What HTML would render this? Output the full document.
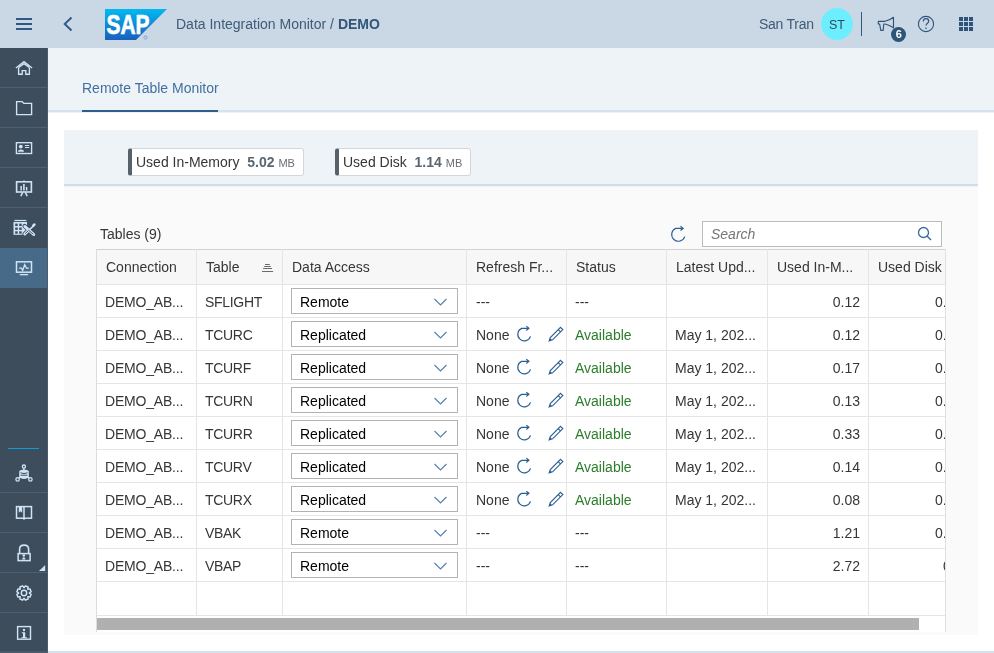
<!DOCTYPE html>
<html><head><meta charset="utf-8"><title>Data Integration Monitor</title>
<style>
*{box-sizing:border-box;margin:0;padding:0}
html,body{width:994px;height:653px;overflow:hidden;background:#fff;font-family:"Liberation Sans",sans-serif;font-size:14px;color:#363636;-webkit-font-smoothing:antialiased}
.a{position:absolute}
.t{position:absolute;white-space:nowrap;line-height:16px;will-change:transform}
svg{position:absolute;overflow:visible}
</style></head><body>
<div class="a" style="left:0;top:0;width:994px;height:48px;background:#cad7e4"></div>
<svg style="left:0;top:0" width="48" height="48"><g fill="#2e5984"><rect x="16" y="18" width="16" height="2"/><rect x="16" y="23" width="16" height="2"/><rect x="16" y="28" width="16" height="2"/></g></svg>
<svg style="left:0;top:0" width="90" height="48"><polyline points="71.5,17.5 64.7,24 71.5,30.5" fill="none" stroke="#2e5984" stroke-width="1.9"/></svg>
<svg style="left:105px;top:9px" width="62" height="31" viewBox="0 0 62 31"><defs><linearGradient id="g" x1="0" y1="0" x2="0" y2="1"><stop offset="0" stop-color="#00b9f2"/><stop offset="1" stop-color="#1b5fbe"/></linearGradient></defs><polygon points="0,0 62,0 31,31 0,31" fill="url(#g)"/><text x="1.5" y="25" font-family="Liberation Sans" font-weight="bold" font-size="27" fill="#fff" stroke="#fff" stroke-width="0.7" textLength="43" lengthAdjust="spacingAndGlyphs">SAP</text><circle cx="40.5" cy="28.5" r="1.6" fill="none" stroke="#3d8fd8" stroke-width="0.6"/></svg>
<div class="t" style="left:176px;top:16px;color:#3e5b79;font-size:14px">Data Integration Monitor / <b style="color:#32557a">DEMO</b></div>
<div class="t" style="left:759px;top:16px;color:#3e5b79;letter-spacing:-0.25px">San Tran</div>
<div class="a" style="left:821px;top:8px;width:32px;height:32px;border-radius:50%;background:#6deeff"></div>
<div class="t" style="left:821px;top:16.5px;width:32px;text-align:center;font-size:12.5px;color:#2f4a5e">ST</div>
<div class="a" style="left:861px;top:12px;width:1px;height:24px;background:#35577a"></div>
<svg style="left:0;top:0" width="994" height="48"><g fill="none" stroke="#2f5479" stroke-width="1.15" stroke-linejoin="round"><path d="M878.3,21.3 H885 Q889.5,20.5 893.5,17.3 V27.8 Q889.5,25 885,24 H883.8 L883.2,30.3 H880.8 L879.6,24 H878.3 Z"/></g><circle cx="926" cy="24" r="7.6" fill="none" stroke="#2f5479" stroke-width="1.1"/><path d="M923.3,21.5 C923.3,19.6 924.6,18.6 926,18.6 C927.6,18.6 928.7,19.7 928.7,21.2 C928.7,23.2 926,23.3 926,25.6" fill="none" stroke="#2f5479" stroke-width="1.2"/><circle cx="926" cy="28.3" r="0.8" fill="#2f5479"/></svg>
<div class="a" style="left:890.5px;top:26.5px;width:15.5px;height:15.5px;border-radius:50%;background:#2d5479"></div>
<div class="t" style="left:890.5px;top:27px;width:15.5px;text-align:center;font-size:11px;font-weight:bold;color:#fff;line-height:14px">6</div>
<svg style="left:0;top:0" width="994" height="48"><g fill="#2f5479"><rect x="959" y="17" width="4" height="4"/><rect x="964" y="17" width="4" height="4"/><rect x="969" y="17" width="4" height="4"/><rect x="959" y="22" width="4" height="4"/><rect x="964" y="22" width="4" height="4"/><rect x="969" y="22" width="4" height="4"/><rect x="959" y="27" width="4" height="4"/><rect x="964" y="27" width="4" height="4"/><rect x="969" y="27" width="4" height="4"/></g></svg>
<div class="a" style="left:0;top:48px;width:48px;height:605px;background:#3e4d5b"></div>
<div class="a" style="left:0;top:248px;width:48px;height:40px;background:#486a89"></div>
<div class="a" style="left:0;top:87px;width:48px;height:1px;background:#4f6071"></div>
<div class="a" style="left:0;top:127px;width:48px;height:1px;background:#4f6071"></div>
<div class="a" style="left:0;top:167px;width:48px;height:1px;background:#4f6071"></div>
<div class="a" style="left:0;top:207px;width:48px;height:1px;background:#4f6071"></div>
<div class="a" style="left:0;top:492px;width:48px;height:1px;background:#4f6071"></div>
<div class="a" style="left:0;top:532px;width:48px;height:1px;background:#4f6071"></div>
<div class="a" style="left:0;top:572px;width:48px;height:1px;background:#4f6071"></div>
<div class="a" style="left:0;top:612px;width:48px;height:1px;background:#4f6071"></div>
<div class="a" style="left:8px;top:448px;width:31px;height:1px;background:#0a9fd8"></div>
<svg style="left:0;top:0" width="48" height="653"><g fill="none" stroke="#d0e4f7" stroke-width="1.35" stroke-linejoin="miter">
<path d="M15.9,68 L24,61.6 L32.1,68"/><path d="M18.6,67.4 L24,63.6 L29.4,67.4"/><path d="M18.6,67.4 V74.2 H22.2 V70.6 H25.8 V74.2 H29.4 V67.4"/>
<path d="M16.6,101.6 H22.2 L23.8,103.4 H31.6 V114.6 H16.6 Z"/>
<rect x="16.4" y="142.7" width="15.2" height="10.8"/>
<rect x="16.6" y="181.8" width="14.8" height="10.2" stroke-width="1.6"/>
<path d="M22.6,192.6 L20.8,196.2 M25.4,192.6 L27.2,196.2" stroke-width="1.5"/>
<rect x="16.5" y="261.8" width="15" height="10.4" stroke-width="1.5"/>
<path d="M19.2,268.2 H21.4 L22.7,270.4 L24.7,264.6 L26.5,268.2 H28.8" stroke-width="1.3"/>
<rect x="16.5" y="506.6" width="15" height="11.6" stroke-width="1.5"/>
<path d="M24,506.6 V519.8" stroke-width="1.5"/>
<rect x="18.1" y="553.6" width="12" height="7" stroke-width="1.5"/>
<path d="M19.6,553.6 V549.2 C19.6,543.8 28.6,543.8 28.6,549.2 V553.6" stroke-width="1.6"/>
<rect x="17.6" y="626.6" width="12.9" height="12.6" stroke-width="1.4"/>
<polygon points="31.18,594.33 30.01,597.14 27.94,596.69 27.69,596.94 28.14,599.01 25.33,600.18 24.18,598.40 23.82,598.40 22.67,600.18 19.86,599.01 20.31,596.94 20.06,596.69 17.99,597.14 16.82,594.33 18.60,593.18 18.60,592.82 16.82,591.67 17.99,588.86 20.06,589.31 20.31,589.06 19.86,586.99 22.67,585.82 23.82,587.60 24.18,587.60 25.33,585.82 28.14,586.99 27.69,589.06 27.94,589.31 30.01,588.86 31.18,591.67 29.40,592.82 29.40,593.18" stroke-width="1.4" stroke-linejoin="round"/>
<circle cx="24" cy="593" r="2.7" stroke-width="1.4"/>
<path d="M20,470.8 V477.2 M28,470.8 V477.2" stroke-width="1.5"/>
<circle cx="17.6" cy="479.4" r="1.7" stroke-width="1.3"/><circle cx="30.4" cy="479.4" r="1.7" stroke-width="1.3"/>
<path d="M20,477 L19,478.3 M28,477 L29,478.3" stroke-width="1.3"/>
<circle cx="23.9" cy="466.6" r="1.6" stroke-width="1.3"/>
</g>
<g fill="#d0e4f7">
<path d="M24,180 l1.3,1.8 h-2.6 z"/>
<rect x="20.4" y="186" width="1.5" height="4.5"/><rect x="23.1" y="184" width="1.6" height="6.5"/><rect x="25.9" y="187" width="1.4" height="3.5"/>
<circle cx="20.8" cy="146.6" r="1.9"/><path d="M18,151.8 C18,148.6 24,148.6 24,151.8 Z"/>
<rect x="24.9" y="145" width="4.3" height="1"/><rect x="24.9" y="147" width="4.3" height="1"/>
<rect x="19.8" y="274" width="8.3" height="1.3"/>
<path d="M18.8,507 H22.2 V512.8 L20.5,511.2 L18.8,512.8 Z"/>
<circle cx="23.8" cy="555.5" r="1.3"/><path d="M22.2,559.6 C22.2,556.6 25.4,556.6 25.4,559.6 Z"/>
<polygon points="39,571 45.2,565 45.2,571"/>
<circle cx="24" cy="630" r="1.2"/><path d="M21.8,632.2 H25.2 V637.2 H27 V638.3 H21.3 V637.2 H23 V633.3 H21.8 Z"/>
<rect x="23.2" y="468" width="1.4" height="2.2"/>
<path d="M19.9,471 C19.9,469.2 28.1,469.2 28.1,471 V477.6 C28.1,479.3 19.9,479.3 19.9,477.6 Z"/>
</g>
<g stroke="#3e4d5b" stroke-width="1" fill="none"><path d="M20.6,472.6 C22,473.8 26,473.8 27.4,472.6 M20.6,475.2 H27.4"/></g>
<g fill="#d0e4f7"><rect x="13.5" y="221.9" width="13.5" height="12.9"/><rect x="14" y="219.9" width="12.3" height="1.1"/></g>
<g fill="#3e4d5b"><rect x="15.2" y="223.6" width="2.5" height="2.4"/><rect x="19.2" y="223.6" width="2.5" height="2.4"/><rect x="15.2" y="227.5" width="2.5" height="2.4"/><rect x="19.2" y="227.5" width="2.5" height="2.4"/><rect x="15.2" y="231.3" width="2.5" height="2.4"/><rect x="19.2" y="231.3" width="2.5" height="2.4"/>
<rect x="14" y="220.2" width="0.8" height="0.6"/></g>
<g stroke-linecap="round"><path d="M24.6,234.2 L33.8,225.6" stroke="#3e4d5b" stroke-width="4.4"/><path d="M24.6,226.2 L33.8,234.6" stroke="#3e4d5b" stroke-width="4.4"/>
<path d="M24.8,234 L29,230" stroke="#d0e4f7" stroke-width="3"/><path d="M29,230 L33.6,225.8" stroke="#d0e4f7" stroke-width="1.6"/><path d="M33.4,225.4 L34.4,224.6" stroke="#d0e4f7" stroke-width="2.6"/>
<path d="M24.8,226.4 L33.8,234.6" stroke="#d0e4f7" stroke-width="2.8"/>
<path d="M25.4,233.4 L28,231" stroke="#3e4d5b" stroke-width="0.9"/><path d="M28.6,230.2 L33,234" stroke="#3e4d5b" stroke-width="0.9"/></g>
</svg>
<div class="a" style="left:48px;top:48px;width:946px;height:65px;background:#eef3f7"></div>
<div class="a" style="left:48px;top:110px;width:946px;height:2px;background:#d5e1ec"></div>
<div class="a" style="left:82px;top:110px;width:136px;height:2px;background:#2f5e8e"></div>
<div class="t" style="left:82px;top:80px;color:#4170a0">Remote Table Monitor</div>
<div class="a" style="left:64px;top:130px;width:914px;height:505px;background:#fafafa"></div>
<div class="a" style="left:64px;top:130px;width:914px;height:56px;background:#eef3f7;border-bottom:2px solid #cfdeec"></div>
<div class="a" style="left:64px;top:186px;width:914px;height:1px;background:#eff2f6"></div>
<div class="a" style="left:128px;top:148px;width:176px;height:28px;background:#fff;border:1px solid #d3d7db;border-left:4px solid #56616a;border-radius:3px"></div>
<div class="t" style="left:136px;top:154px">Used In-Memory&nbsp; <b style="color:#5b6670">5.02</b> <span style="font-size:11px;color:#6a6d70">MB</span></div>
<div class="a" style="left:335px;top:148px;width:136px;height:28px;background:#fff;border:1px solid #d3d7db;border-left:4px solid #56616a;border-radius:3px"></div>
<div class="t" style="left:343px;top:154px">Used Disk&nbsp; <b style="color:#5b6670">1.14</b> <span style="font-size:11px;color:#6a6d70">MB</span></div>
<div class="t" style="left:100px;top:226px">Tables (9)</div>
<svg style="left:0;top:0" width="994" height="653"><path d="M684.77,236.57 A6.7,6.7 0 1 1 675.67,228.38 H683.14" fill="none" stroke="#2b5f91" stroke-width="1.15"/><path d="M680.46,226.21 L683.14,228.38 L680.46,230.54" fill="none" stroke="#2b5f91" stroke-width="1.15"/></svg>
<div class="a" style="left:702px;top:221px;width:240px;height:26px;background:#fff;border:1px solid #b9bdc1"></div>
<div class="t" style="left:711px;top:226px;font-style:italic;color:#74777a">Search</div>
<svg style="left:0;top:0" width="994" height="653"><circle cx="923.5" cy="232.5" r="5" fill="none" stroke="#3b6aa0" stroke-width="1.3"/><line x1="927" y1="236" x2="931" y2="240" stroke="#3b6aa0" stroke-width="1.5"/></svg>
<div class="a" style="left:96px;top:249px;width:850px;height:383px;background:#fff"></div>
<div class="a" style="left:96px;top:249px;width:850px;height:35px;background:#f7f7f7"></div>
<div class="a" style="left:96px;top:249px;width:850px;height:1px;background:#d2d2d2"></div>
<div class="a" style="left:96px;top:284px;width:850px;height:1px;background:#e5e5e5"></div>
<div class="a" style="left:96px;top:317px;width:850px;height:1px;background:#e5e5e5"></div>
<div class="a" style="left:96px;top:350px;width:850px;height:1px;background:#e5e5e5"></div>
<div class="a" style="left:96px;top:383px;width:850px;height:1px;background:#e5e5e5"></div>
<div class="a" style="left:96px;top:416px;width:850px;height:1px;background:#e5e5e5"></div>
<div class="a" style="left:96px;top:449px;width:850px;height:1px;background:#e5e5e5"></div>
<div class="a" style="left:96px;top:482px;width:850px;height:1px;background:#e5e5e5"></div>
<div class="a" style="left:96px;top:515px;width:850px;height:1px;background:#e5e5e5"></div>
<div class="a" style="left:96px;top:548px;width:850px;height:1px;background:#e5e5e5"></div>
<div class="a" style="left:96px;top:581px;width:850px;height:1px;background:#e5e5e5"></div>
<div class="a" style="left:96px;top:615px;width:850px;height:1px;background:#e5e5e5"></div>
<div class="a" style="left:196px;top:249px;width:1px;height:367px;background:#e5e5e5"></div>
<div class="a" style="left:282px;top:249px;width:1px;height:367px;background:#e5e5e5"></div>
<div class="a" style="left:466px;top:249px;width:1px;height:367px;background:#e5e5e5"></div>
<div class="a" style="left:566px;top:249px;width:1px;height:367px;background:#e5e5e5"></div>
<div class="a" style="left:666px;top:249px;width:1px;height:367px;background:#e5e5e5"></div>
<div class="a" style="left:767px;top:249px;width:1px;height:367px;background:#e5e5e5"></div>
<div class="a" style="left:868px;top:249px;width:1px;height:367px;background:#e5e5e5"></div>
<div class="a" style="left:96px;top:249px;width:1px;height:383px;background:#dcdcdc"></div>
<div class="a" style="left:945px;top:249px;width:1px;height:383px;background:#e0e0e0"></div>
<div class="t" style="left:106px;top:259px">Connection</div>
<div class="t" style="left:206px;top:259px">Table</div>
<div class="t" style="left:292px;top:259px">Data Access</div>
<div class="t" style="left:476px;top:259px">Refresh Fr...</div>
<div class="t" style="left:576px;top:259px">Status</div>
<div class="t" style="left:676px;top:259px">Latest Upd...</div>
<div class="t" style="left:777px;top:259px">Used In-M...</div>
<div class="t" style="left:878px;top:259px">Used Disk</div>
<svg style="left:0;top:0" width="994" height="653"><g fill="#6a6a6a"><rect x="265" y="264" width="4.8" height="1"/><rect x="264.2" y="266" width="6.6" height="1"/><rect x="263.1" y="268" width="8.9" height="1"/><rect x="262" y="271" width="11.1" height="1"/></g></svg>
<div class="t" style="left:105px;top:294px;letter-spacing:-0.2px">DEMO_AB...</div>
<div class="t" style="left:205px;top:294px;letter-spacing:-0.3px">SFLIGHT</div>
<div class="a" style="left:291px;top:288px;width:167px;height:26px;background:#fff;border:1px solid #b3b3b3"></div>
<div class="t" style="left:300px;top:294px;color:#000">Remote</div>
<div class="t" style="left:476px;top:294px">---</div>
<div class="t" style="left:575px;top:294px;">---</div>
<div class="t" style="left:675px;top:294px"></div>
<div class="t" style="left:767px;top:294px;width:93px;text-align:right">0.12</div>
<div class="a" style="left:869px;top:294px;width:76px;height:17px;overflow:hidden"><div class="t" style="left:66px;top:0">0.12</div></div>
<div class="t" style="left:105px;top:327px;letter-spacing:-0.2px">DEMO_AB...</div>
<div class="t" style="left:205px;top:327px;letter-spacing:-0.3px">TCURC</div>
<div class="a" style="left:291px;top:321px;width:167px;height:26px;background:#fff;border:1px solid #b3b3b3"></div>
<div class="t" style="left:300px;top:327px;color:#000">Replicated</div>
<div class="t" style="left:476px;top:327px">None</div>
<div class="t" style="left:575px;top:327px;color:#2b7d2b">Available</div>
<div class="t" style="left:675px;top:327px">May 1, 202...</div>
<div class="t" style="left:767px;top:327px;width:93px;text-align:right">0.12</div>
<div class="a" style="left:869px;top:327px;width:76px;height:17px;overflow:hidden"><div class="t" style="left:66px;top:0">0.12</div></div>
<div class="t" style="left:105px;top:360px;letter-spacing:-0.2px">DEMO_AB...</div>
<div class="t" style="left:205px;top:360px;letter-spacing:-0.3px">TCURF</div>
<div class="a" style="left:291px;top:354px;width:167px;height:26px;background:#fff;border:1px solid #b3b3b3"></div>
<div class="t" style="left:300px;top:360px;color:#000">Replicated</div>
<div class="t" style="left:476px;top:360px">None</div>
<div class="t" style="left:575px;top:360px;color:#2b7d2b">Available</div>
<div class="t" style="left:675px;top:360px">May 1, 202...</div>
<div class="t" style="left:767px;top:360px;width:93px;text-align:right">0.17</div>
<div class="a" style="left:869px;top:360px;width:76px;height:17px;overflow:hidden"><div class="t" style="left:66px;top:0">0.12</div></div>
<div class="t" style="left:105px;top:393px;letter-spacing:-0.2px">DEMO_AB...</div>
<div class="t" style="left:205px;top:393px;letter-spacing:-0.3px">TCURN</div>
<div class="a" style="left:291px;top:387px;width:167px;height:26px;background:#fff;border:1px solid #b3b3b3"></div>
<div class="t" style="left:300px;top:393px;color:#000">Replicated</div>
<div class="t" style="left:476px;top:393px">None</div>
<div class="t" style="left:575px;top:393px;color:#2b7d2b">Available</div>
<div class="t" style="left:675px;top:393px">May 1, 202...</div>
<div class="t" style="left:767px;top:393px;width:93px;text-align:right">0.13</div>
<div class="a" style="left:869px;top:393px;width:76px;height:17px;overflow:hidden"><div class="t" style="left:66px;top:0">0.12</div></div>
<div class="t" style="left:105px;top:426px;letter-spacing:-0.2px">DEMO_AB...</div>
<div class="t" style="left:205px;top:426px;letter-spacing:-0.3px">TCURR</div>
<div class="a" style="left:291px;top:420px;width:167px;height:26px;background:#fff;border:1px solid #b3b3b3"></div>
<div class="t" style="left:300px;top:426px;color:#000">Replicated</div>
<div class="t" style="left:476px;top:426px">None</div>
<div class="t" style="left:575px;top:426px;color:#2b7d2b">Available</div>
<div class="t" style="left:675px;top:426px">May 1, 202...</div>
<div class="t" style="left:767px;top:426px;width:93px;text-align:right">0.33</div>
<div class="a" style="left:869px;top:426px;width:76px;height:17px;overflow:hidden"><div class="t" style="left:66px;top:0">0.12</div></div>
<div class="t" style="left:105px;top:459px;letter-spacing:-0.2px">DEMO_AB...</div>
<div class="t" style="left:205px;top:459px;letter-spacing:-0.3px">TCURV</div>
<div class="a" style="left:291px;top:453px;width:167px;height:26px;background:#fff;border:1px solid #b3b3b3"></div>
<div class="t" style="left:300px;top:459px;color:#000">Replicated</div>
<div class="t" style="left:476px;top:459px">None</div>
<div class="t" style="left:575px;top:459px;color:#2b7d2b">Available</div>
<div class="t" style="left:675px;top:459px">May 1, 202...</div>
<div class="t" style="left:767px;top:459px;width:93px;text-align:right">0.14</div>
<div class="a" style="left:869px;top:459px;width:76px;height:17px;overflow:hidden"><div class="t" style="left:66px;top:0">0.12</div></div>
<div class="t" style="left:105px;top:492px;letter-spacing:-0.2px">DEMO_AB...</div>
<div class="t" style="left:205px;top:492px;letter-spacing:-0.3px">TCURX</div>
<div class="a" style="left:291px;top:486px;width:167px;height:26px;background:#fff;border:1px solid #b3b3b3"></div>
<div class="t" style="left:300px;top:492px;color:#000">Replicated</div>
<div class="t" style="left:476px;top:492px">None</div>
<div class="t" style="left:575px;top:492px;color:#2b7d2b">Available</div>
<div class="t" style="left:675px;top:492px">May 1, 202...</div>
<div class="t" style="left:767px;top:492px;width:93px;text-align:right">0.08</div>
<div class="a" style="left:869px;top:492px;width:76px;height:17px;overflow:hidden"><div class="t" style="left:66px;top:0">0.12</div></div>
<div class="t" style="left:105px;top:525px;letter-spacing:-0.2px">DEMO_AB...</div>
<div class="t" style="left:205px;top:525px;letter-spacing:-0.3px">VBAK</div>
<div class="a" style="left:291px;top:519px;width:167px;height:26px;background:#fff;border:1px solid #b3b3b3"></div>
<div class="t" style="left:300px;top:525px;color:#000">Remote</div>
<div class="t" style="left:476px;top:525px">---</div>
<div class="t" style="left:575px;top:525px;">---</div>
<div class="t" style="left:675px;top:525px"></div>
<div class="t" style="left:767px;top:525px;width:93px;text-align:right">1.21</div>
<div class="a" style="left:869px;top:525px;width:76px;height:17px;overflow:hidden"><div class="t" style="left:66px;top:0">0.12</div></div>
<div class="t" style="left:105px;top:558px;letter-spacing:-0.2px">DEMO_AB...</div>
<div class="t" style="left:205px;top:558px;letter-spacing:-0.3px">VBAP</div>
<div class="a" style="left:291px;top:552px;width:167px;height:26px;background:#fff;border:1px solid #b3b3b3"></div>
<div class="t" style="left:300px;top:558px;color:#000">Remote</div>
<div class="t" style="left:476px;top:558px">---</div>
<div class="t" style="left:575px;top:558px;">---</div>
<div class="t" style="left:675px;top:558px"></div>
<div class="t" style="left:767px;top:558px;width:93px;text-align:right">2.72</div>
<div class="a" style="left:869px;top:558px;width:76px;height:17px;overflow:hidden"><div class="t" style="left:74px;top:0">0.12</div></div>
<svg style="left:0;top:0" width="994" height="653"><polyline points="434.5,299 440.5,305 446.5,299" fill="none" stroke="#5580aa" stroke-width="1.15"/><polyline points="434.5,332 440.5,338 446.5,332" fill="none" stroke="#5580aa" stroke-width="1.15"/><path d="M530.48,336.31 A6.5,6.5 0 1 1 521.66,328.36 H528.90" fill="none" stroke="#2b5f91" stroke-width="1.15"/><path d="M526.30,326.26 L528.90,328.36 L526.30,330.46" fill="none" stroke="#2b5f91" stroke-width="1.15"/><path d="M560.5,327.3 L562.8,329.6 L552.6,339.8 L549.2,340.8 L550.3,337.5 Z M558.2,329.6 L560.5,331.9" fill="none" stroke="#2b5f91" stroke-width="1.15" stroke-linejoin="miter"/><path d="M549.2,340.8 L550,338.2 L551.8,340 Z" fill="#2b5f91"/><polyline points="434.5,365 440.5,371 446.5,365" fill="none" stroke="#5580aa" stroke-width="1.15"/><path d="M530.48,369.31 A6.5,6.5 0 1 1 521.66,361.36 H528.90" fill="none" stroke="#2b5f91" stroke-width="1.15"/><path d="M526.30,359.26 L528.90,361.36 L526.30,363.46" fill="none" stroke="#2b5f91" stroke-width="1.15"/><path d="M560.5,360.3 L562.8,362.6 L552.6,372.8 L549.2,373.8 L550.3,370.5 Z M558.2,362.6 L560.5,364.9" fill="none" stroke="#2b5f91" stroke-width="1.15" stroke-linejoin="miter"/><path d="M549.2,373.8 L550,371.2 L551.8,373 Z" fill="#2b5f91"/><polyline points="434.5,398 440.5,404 446.5,398" fill="none" stroke="#5580aa" stroke-width="1.15"/><path d="M530.48,402.31 A6.5,6.5 0 1 1 521.66,394.36 H528.90" fill="none" stroke="#2b5f91" stroke-width="1.15"/><path d="M526.30,392.26 L528.90,394.36 L526.30,396.46" fill="none" stroke="#2b5f91" stroke-width="1.15"/><path d="M560.5,393.3 L562.8,395.6 L552.6,405.8 L549.2,406.8 L550.3,403.5 Z M558.2,395.6 L560.5,397.9" fill="none" stroke="#2b5f91" stroke-width="1.15" stroke-linejoin="miter"/><path d="M549.2,406.8 L550,404.2 L551.8,406 Z" fill="#2b5f91"/><polyline points="434.5,431 440.5,437 446.5,431" fill="none" stroke="#5580aa" stroke-width="1.15"/><path d="M530.48,435.31 A6.5,6.5 0 1 1 521.66,427.36 H528.90" fill="none" stroke="#2b5f91" stroke-width="1.15"/><path d="M526.30,425.26 L528.90,427.36 L526.30,429.46" fill="none" stroke="#2b5f91" stroke-width="1.15"/><path d="M560.5,426.3 L562.8,428.6 L552.6,438.8 L549.2,439.8 L550.3,436.5 Z M558.2,428.6 L560.5,430.9" fill="none" stroke="#2b5f91" stroke-width="1.15" stroke-linejoin="miter"/><path d="M549.2,439.8 L550,437.2 L551.8,439 Z" fill="#2b5f91"/><polyline points="434.5,464 440.5,470 446.5,464" fill="none" stroke="#5580aa" stroke-width="1.15"/><path d="M530.48,468.31 A6.5,6.5 0 1 1 521.66,460.36 H528.90" fill="none" stroke="#2b5f91" stroke-width="1.15"/><path d="M526.30,458.26 L528.90,460.36 L526.30,462.46" fill="none" stroke="#2b5f91" stroke-width="1.15"/><path d="M560.5,459.3 L562.8,461.6 L552.6,471.8 L549.2,472.8 L550.3,469.5 Z M558.2,461.6 L560.5,463.9" fill="none" stroke="#2b5f91" stroke-width="1.15" stroke-linejoin="miter"/><path d="M549.2,472.8 L550,470.2 L551.8,472 Z" fill="#2b5f91"/><polyline points="434.5,497 440.5,503 446.5,497" fill="none" stroke="#5580aa" stroke-width="1.15"/><path d="M530.48,501.31 A6.5,6.5 0 1 1 521.66,493.36 H528.90" fill="none" stroke="#2b5f91" stroke-width="1.15"/><path d="M526.30,491.26 L528.90,493.36 L526.30,495.46" fill="none" stroke="#2b5f91" stroke-width="1.15"/><path d="M560.5,492.3 L562.8,494.6 L552.6,504.8 L549.2,505.8 L550.3,502.5 Z M558.2,494.6 L560.5,496.9" fill="none" stroke="#2b5f91" stroke-width="1.15" stroke-linejoin="miter"/><path d="M549.2,505.8 L550,503.2 L551.8,505 Z" fill="#2b5f91"/><polyline points="434.5,530 440.5,536 446.5,530" fill="none" stroke="#5580aa" stroke-width="1.15"/><polyline points="434.5,563 440.5,569 446.5,563" fill="none" stroke="#5580aa" stroke-width="1.15"/></svg>
<div class="a" style="left:97px;top:618px;width:822px;height:12px;background:#b0b0b0"></div>
<div class="a" style="left:48px;top:651px;width:946px;height:2px;background:#d5e1ec"></div>
<div class="a" style="left:0;top:651px;width:48px;height:2px;background:#4a5b6b"></div>
<div class="a" style="left:47px;top:48px;width:1px;height:605px;background:#4b5d6e"></div>
</body></html>
